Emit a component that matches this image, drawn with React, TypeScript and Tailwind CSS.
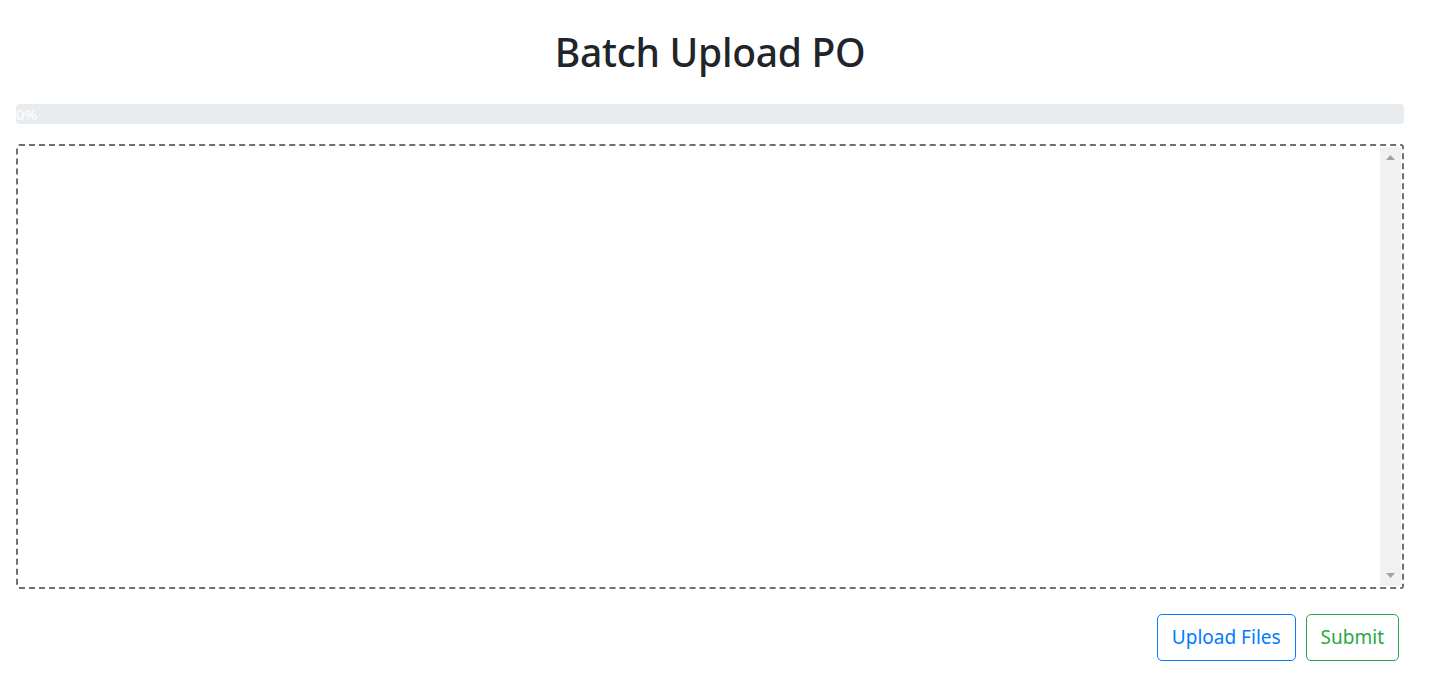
export default function App() {
  const progress = 0;

  return (
    <div className="min-h-screen bg-white pl-4 pr-[39px] font-['Noto_Sans',sans-serif] text-[#212529]">
      {/* Title */}
      <h1 className="pt-[28px] pb-[28px] text-center text-[39px] font-medium leading-[48px] tracking-[-0.3px]">
        Batch Upload PO
      </h1>

      {/* Progress */}
      <div className="h-5 overflow-hidden rounded bg-[#e9ecef]">
        <div
          className="flex h-5 items-center text-[15px] leading-5 text-white"
          style={{ width: `${progress}%` }}
        >
          {progress}%
        </div>
      </div>

      {/* Drop zone */}
      <div className="mt-5 flex h-[445px] rounded-[3px] border-2 border-dashed border-[#707070]">
        <div className="flex-1" />
        <div className="my-px mr-px flex w-[21px] flex-col items-center justify-between bg-[#f1f1f1] py-[8px]">
          <svg width="9" height="5" viewBox="0 0 9 5">
            <polygon points="4.5,0 9,5 0,5" fill="#a3a3a3" />
          </svg>
          <svg width="9" height="5" viewBox="0 0 9 5">
            <polygon points="0,0 9,0 4.5,5" fill="#a3a3a3" />
          </svg>
        </div>
      </div>

      {/* Actions */}
      <div className="mt-[25px] flex justify-end gap-[10px] pr-[5px]">
        <button className="h-[47px] rounded-[5px] border border-[#007bff] px-[14px] text-[19px] text-[#007bff]">
          Upload Files
        </button>
        <button className="h-[47px] rounded-[5px] border border-[#28a745] px-[14px] text-[19px] text-[#28a745]">
          Submit
        </button>
      </div>
    </div>
  );
}
